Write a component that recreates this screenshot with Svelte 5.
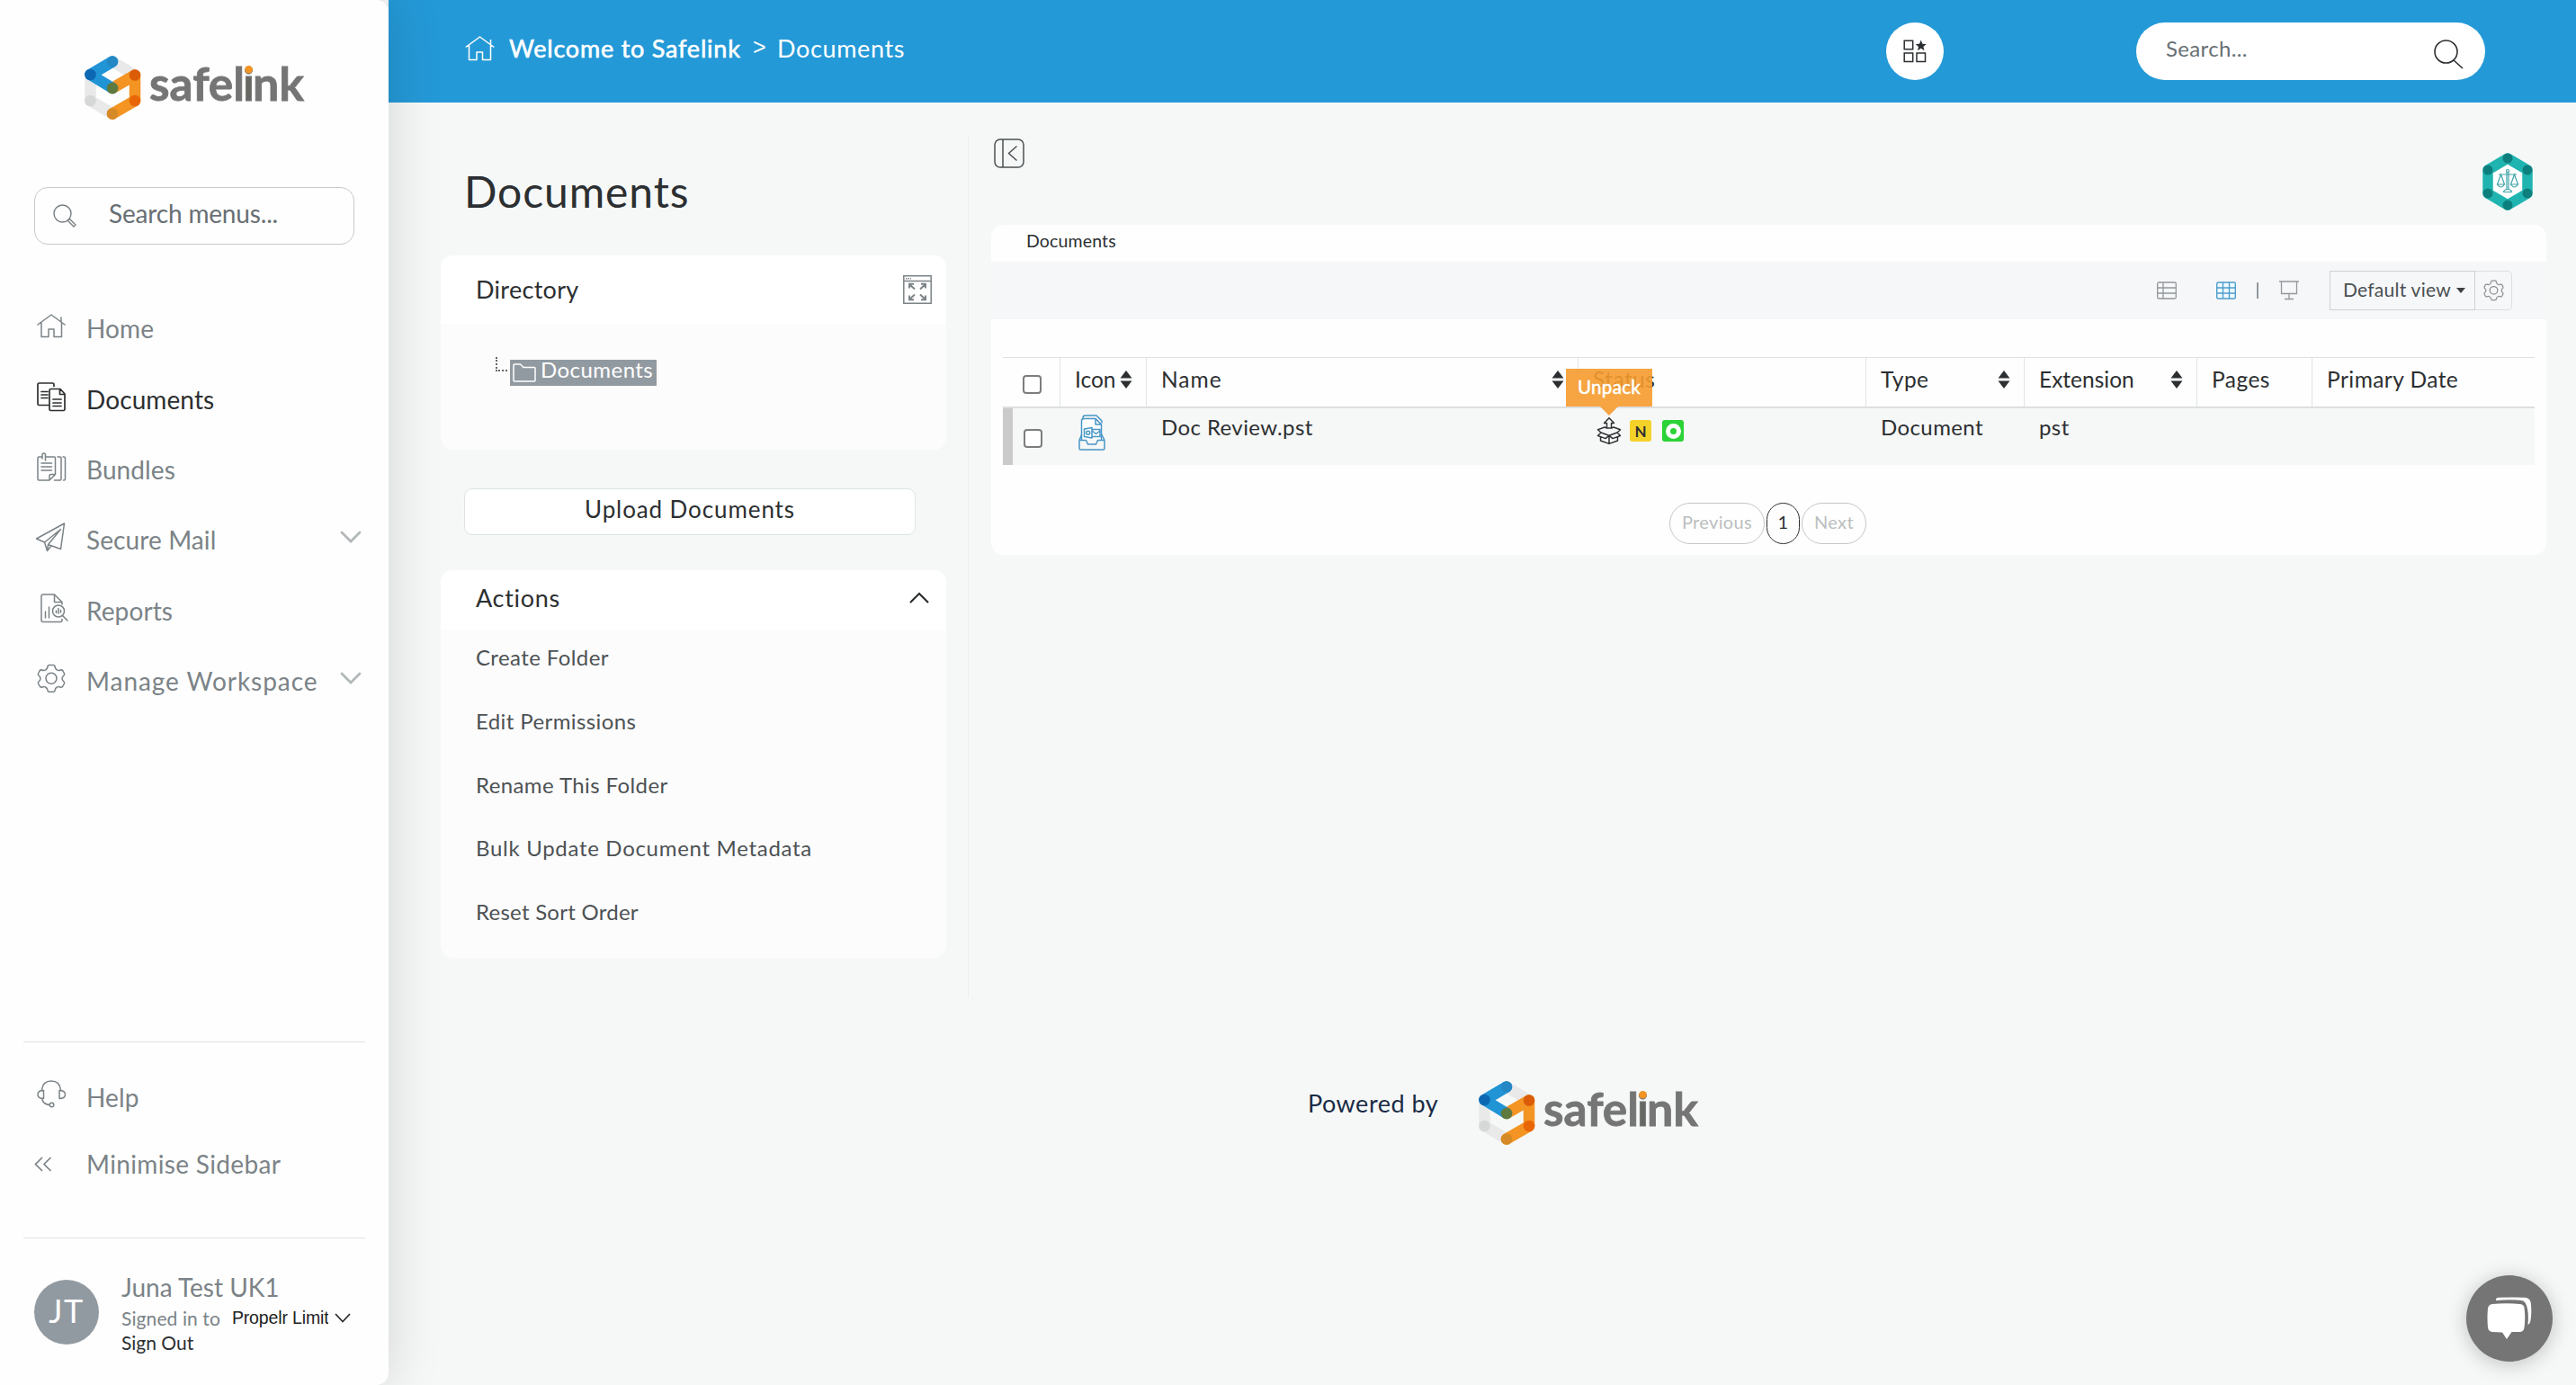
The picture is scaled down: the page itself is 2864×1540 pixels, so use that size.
<script>
  const nav = [
    { label: 'Home', icon: 'home' },
    { label: 'Documents', icon: 'docs', active: true },
    { label: 'Bundles', icon: 'bundles' },
    { label: 'Secure Mail', icon: 'plane', more: true },
    { label: 'Reports', icon: 'report' },
    { label: 'Manage Workspace', icon: 'gear', more: true }
  ];
  const actions = [
    'Create Folder',
    'Edit Permissions',
    'Rename This Folder',
    'Bulk Update Document Metadata',
    'Reset Sort Order'
  ];
  const columns = [
    { label: 'Icon', sort: true },
    { label: 'Name', sort: true },
    { label: 'Status' },
    { label: 'Type', sort: true },
    { label: 'Extension', sort: true },
    { label: 'Pages' },
    { label: 'Primary Date' }
  ];
</script>

{#snippet logo()}
  <svg class="logo" viewBox="0 0 246 72" width="246" height="72">
    <g fill="none" stroke-width="12.5" stroke-linecap="round">
      <path d="M31 6.5 56 21.5M6.5 21V50L31 64.5" stroke="#e9e9ea" />
      <path d="M31 36 56 21.5V50L31 64.5" stroke="#f39423" stroke-linejoin="round" />
      <path d="M31 6.5 6.5 21 31 36" stroke="#2194d6" stroke-linejoin="round" />
    </g>
    <circle cx="6.5" cy="21" r="6.3" fill="#0d68b3" />
    <circle cx="31" cy="6.5" r="6.2" fill="#2488c4" />
    <circle cx="31" cy="36" r="6.3" fill="#5f7a3e" />
    <circle cx="56" cy="21.5" r="6.3" fill="#db5c07" />
    <circle cx="56" cy="50" r="6.3" fill="#e96606" />
    <circle cx="31" cy="64.5" r="6.3" fill="#d58a26" />
    <circle cx="6.5" cy="50" r="6.3" fill="#d6d7d7" />
    <text x="72" y="49.5" textLength="106" lengthAdjust="spacingAndGlyphs">safel</text>
    <text class="dark" x="182.6" y="49.5" text-anchor="middle">i</text>
    <text x="187" y="49.5" textLength="57" lengthAdjust="spacingAndGlyphs">nk</text>
    <circle cx="182.6" cy="15.2" r="4.3" fill="#f39423" />
  </svg>
{/snippet}

{#snippet gearShape()}
  <path d="M12 3.500Q12 1.500 13.500 1.500H18.500Q20 1.500 20 3.500 20.500 6 22.500 7 24 8 26.500 7 28 6.500 29 8L30.500 11Q31 12.500 29.500 13.500 28 15 28 16.500 28 18 29.500 19.500 31 20.500 30.500 22L28.500 25.500Q27.500 26.500 26 26 24 25 22.500 26 20.500 27 20 29.500 20 31.300 18.500 31.300H13.500Q12 31.300 12 29.500 11.500 27 9.500 26 8 25 6 26 4.500 26.500 3.500 25.500L1.500 22Q1 20.500 2.500 19.500 4 18 4 16.500 4 15 2.500 13.500 1 12.500 1.500 11L3 8Q4 6.500 5.500 7 8 8 9.500 7 11.500 6 12 3.500Z" /><circle cx="16" cy="16.300" r="6" />
{/snippet}

{#snippet icon(name)}
  <svg class="ico" viewBox="0 0 32 32" width="32" height="32" fill="none" stroke="currentColor" stroke-width="1.5" stroke-linecap="round" stroke-linejoin="round">
    {#if name === 'home'}
      <path d="M1 15 16 4 31 15M5 12.500V28.500H13V20H19V28.500H27.500V12.500M27 12V7" />
    {:else if name === 'docs'}
      <g stroke-width="1.700"><path d="M13 25.500H2.500Q1 25.500 1 24V2.500Q1 1 2.500 1H17.500Q19 1 19 2.500V4.500M5 10.500H12M5 14H12M5 17.500H12" />
      <path d="M15.500 7.500H26L31 13V30Q31 31.500 29.500 31.500H15.500Q14 31.500 14 30V9Q14 7.500 15.500 7.500ZM25.500 7.500V13.500H31M18 19H27M18 23H27M18 26.500H27" /></g>
    {:else if name === 'bundles'}
      <path d="M5 5H2.500Q1 5 1 6.500V29.500Q1 31 2.500 31H14L20.500 24.500V6.500Q20.500 5 19 5H10M14 31V26Q14 24.500 15.500 24.500H20.500M6 7V3Q6 1 7.700 1 9.500 1 9.500 3V9M5 12H16.500M5 16H16.500M5 20H16.500M23 5H25.500Q27 5 27 6.500V29.500Q27 31 25.500 31H19.500M29 5H30Q31.500 5 31.500 6.500V29.500Q31.500 31 30 31H29.500" />
    {:else if name === 'plane'}
      <path d="M30.500 1 -.500 18 8.500 22 26.500 7.500 12.500 24.500 26.500 29.500ZM8.500 22 11.500 31.500 16 26M11.500 31.500 12.500 24.500M8.500 22 24 9.500" />
    {:else if name === 'report'}
      <path d="M24 28.500V29.500Q24 31.500 22 31.500H3Q1 31.500 1 29.500V3Q1 1 3 1H15.500L24 9.500V12M15.500 1V9.500H24M5.500 20V27M9.500 15V27" transform="translate(4 0)" />
      <circle cx="24" cy="19.500" r="6.500" /><path d="M28.500 24.500 34 30M21.500 19V21.500M24 16.500V22M26.500 18.500V21" />
    {:else if name === 'gear'}
      {@render gearShape()}
    {:else if name === 'help'}
      <path d="M5.500 11Q6.500 1 16 1 25.500 1 26.500 11M7.500 11.500V20.500Q1 20.500 1 16 1 11.500 7.500 11.500ZM25 11.500V20.500Q31.500 20.500 31.500 16 31.500 11.500 25 11.500ZM5.500 20.500Q7 27 14 27.500" /><circle cx="16.500" cy="27.500" r="2.300" />
    {/if}
  </svg>
{/snippet}

{#snippet sortMark()}
  <svg class="sort" viewBox="0 0 14 20" width="14" height="20"><path d="M7 0 13.500 8.500H.500ZM7 20 .500 11.500H13.500Z" fill="#2c2f31" /></svg>
{/snippet}

<div class="app">
  <aside>
    <div class="brand">{@render logo()}</div>
    <div class="menu-search">
      <svg viewBox="0 0 26 26" width="26" height="26" fill="none" stroke="#777e82" stroke-width="1.400"><circle cx="10.500" cy="10.500" r="9.500" /><path d="M16.500 18.500 18.500 16.500 25 23 23 25Z" stroke-linejoin="round" /></svg>
      <span>Search menus...</span>
    </div>
    <nav>
      {#each nav as item}
        <div class={['nav-row', item.active && 'active']}>
          {@render icon(item.icon)}
          <span>{item.label}</span>
          {#if item.more}
            <svg class="chev" viewBox="0 0 24 14" width="24" height="14" fill="none" stroke="#b2b8ba" stroke-width="2.800" stroke-linecap="round"><path d="M2 2 12 12 22 2" /></svg>
          {/if}
        </div>
      {/each}
    </nav>
    <div class="side-foot">
      <div class="nav-row help">{@render icon('help')}<span>Help</span></div>
      <div class="nav-row mini">
        <svg class="dbl" viewBox="0 0 20 17" width="20" height="17" fill="none" stroke="#7b8387" stroke-width="1.700"><path d="M9 1 1.500 8.500 9 16M18.500 1 11 8.500 18.500 16" /></svg>
        <span>Minimise Sidebar</span>
      </div>
    </div>
    <div class="user">
      <div class="avatar">JT</div>
      <div class="user-info">
        <div class="user-name">Juna Test UK1</div>
        <div class="user-org">
          <span>Signed in to</span><b>Propelr Limit</b>
          <svg viewBox="0 0 18 11" width="18" height="11" fill="none" stroke="#2c2f31" stroke-width="1.800"><path d="M1 1 9 9.500 17 1" /></svg>
        </div>
        <div class="sign-out">Sign Out</div>
      </div>
    </div>
  </aside>

  <div class="content">
    <header>
      <svg class="home" viewBox="0 0 33 28" width="33" height="28" fill="none" stroke="#fff" stroke-width="1.500" stroke-linejoin="round"><path d="M.700 12.500 16.500 1 32.300 12.500M4.500 10V26.500H13V18H19.500V26.500H28.500V10M28.500 9.500V4" /></svg>
      <span class="crumb-home">Welcome to Safelink</span>
      <span class="crumb-sep">&gt;</span>
      <span class="crumb-here">Documents</span>
      <div class="apps">
        <svg viewBox="0 0 26 26" width="26" height="26" fill="none" stroke="#2c2f31" stroke-width="1.500"><path d="M1.200 1.200H10.700V10.700H1.200ZM1.200 15H10.700V24.500H1.200ZM15 15H24.500V24.500H15Z" /><path d="M19.700.500 21.400 4.800 25.700 5 22.400 7.900 23.500 12.200 19.700 9.800 15.900 12.200 17 7.900 13.700 5 18 4.800Z" fill="#2c2f31" stroke="none" /></svg>
      </div>
      <div class="search">
        <span>Search...</span>
        <svg viewBox="0 0 33 33" width="33" height="33" fill="none" stroke="#2c2f31" stroke-width="1.600"><circle cx="13.500" cy="13.500" r="12.500" /><path d="M22 23 32 32" /></svg>
      </div>
    </header>

    <div class="body">
      <section class="left">
        <h1>Documents</h1>
        <div class="card directory">
          <div class="card-head">
            <span>Directory</span>
            <svg viewBox="0 0 32 32" width="32" height="32" fill="none" stroke="#7b8387" stroke-width="1.500"><path d="M.800.800H31.200V31.200H.800ZM.800 6.500H31.200" /><path d="M3 3.700H9" stroke-dasharray="1.500 1" /><path d="M13 15.500 7 10M7 14.500V9.700H12M19 15.500 25 10M20 9.700H25V14.500M13 21.500 7 27M7 22.500V27.300H12M19 21.500 25 27M20 27.300H25V22.500" stroke-width="1.900" /></svg>
          </div>
          <div class="tree">
            <i class="branch"></i>
            <div class="node">
              <svg viewBox="0 0 26 21" width="26" height="21" fill="none" stroke="#fff" stroke-width="1.500" stroke-linejoin="round"><path d="M1 2Q1 1 2 1H8.500L12 4.500H24Q25 4.500 25 5.500V19Q25 20 24 20H2Q1 20 1 19Z" /></svg>
              <span>Documents</span>
            </div>
          </div>
        </div>
        <button class="upload">Upload Documents</button>
        <div class="card actions">
          <div class="card-head">
            <span>Actions</span>
            <svg viewBox="0 0 22 13" width="22" height="13" fill="none" stroke="#2c2f31" stroke-width="2.200"><path d="M1 12 11 2 21 12" /></svg>
          </div>
          {#each actions as a}<div class="action">{a}</div>{/each}
        </div>
      </section>

      <section class="right">
        <div class="tools">
          <svg class="collapse" viewBox="0 0 34 34" width="34" height="34" fill="none" stroke="#4b5052" stroke-width="1.500"><rect x="1" y="1" width="32" height="31" rx="6" /><path d="M10 1V32M25.500 8.500 16.500 16.500 25.500 24.500" /></svg>
          <svg class="badge" viewBox="0 0 56 64" width="56" height="64">
            <path d="M28 6 50 19V45L28 58 6 45V19Z" fill="#fff" stroke="#20b4b0" stroke-width="11.500" stroke-linejoin="round" />
            <g fill="#0d7f7d"><circle cx="28" cy="6" r="5.500" /><circle cx="50" cy="19" r="5.500" /><circle cx="50" cy="45" r="5.500" /><circle cx="28" cy="58" r="5.500" /><circle cx="6" cy="45" r="5.500" /><circle cx="6" cy="19" r="5.500" /></g>
            <g fill="none" stroke="#3fa5a8" stroke-width="1.200"><path d="M18 24H38M27 21V40M29 21V40M23.500 43.500Q24 40.500 28 40.500T32.500 43.500ZM20.500 24 16.500 35H24.500ZM35.500 24 31.500 35H39.500ZM16.500 35Q20.500 41 24.500 35M31.500 35Q35.500 41 39.500 35" /><circle cx="28" cy="20" r="1.500" /></g>
          </svg>
        </div>

        <div class="panel">
          <div class="panel-title">Documents</div>
          <div class="toolbar">
            <svg class="v-list" viewBox="0 0 22 20" width="22" height="20" fill="none" stroke="#92989b" stroke-width="1.300"><rect x=".700" y="1" width="20.600" height="18" rx="1.500" /><path d="M7 1V19M1 7H21M1 13H21" /></svg>
            <svg class="v-grid" viewBox="0 0 22 20" width="22" height="20" fill="#eefaff" stroke="#4f9dcb" stroke-width="1.400"><rect x=".700" y="1" width="20.600" height="18" rx="1.500" /><path d="M7.500 1V19M14.500 1V19M1 7H21M1 13H21" /></svg>
            <i class="bar"></i>
            <svg class="v-show" viewBox="0 0 22 22" width="22" height="22" fill="none" stroke="#92989b" stroke-width="1.300"><path d="M0 1H22M2.500 1V14.500H19.500V1M11 14.500V20.500M6 20.500H16" /></svg>
            <div class="view"><span>Default view</span><i class="caret"></i></div>
            <div class="cog">
              <svg viewBox="0 0 32 33" width="23" height="24" fill="none" stroke="#8b9194" stroke-width="1.700" stroke-linejoin="round">{@render gearShape()}</svg>
            </div>
          </div>

          <div class="table">
            <div class="tr head">
              <div class="th check"><i class="box"></i></div>
              {#each columns as c}
                <div class="th"><span>{c.label}</span>{#if c.sort}{@render sortMark()}{/if}</div>
              {/each}
            </div>
            <div class="tr row">
              <div class="td check"><i class="box"></i></div>
              <div class="td file">
                <svg viewBox="0 0 30 40" width="30" height="40" fill="none" stroke="#4796c6" stroke-width="1.500" stroke-linejoin="round" stroke-linecap="round"><path d="M5 3.500Q5 1 7.500 1H20L26 7V9" /><path d="M3.500 28V7Q3.500 4.500 6 4.500H19L25.500 11V28M19 4.500V11H25.500" fill="#fff" /><path d="M3.500 22.500 1 28.500V37.500Q1 39 2.500 39H27.500Q29 39 29 37.500V28.500L26 22.500M1 28.500H8.500L10.500 33H19.500L21.500 28.500H29" /><path d="M6.500 16 15 14.500V26L6.500 24.500ZM15 16.500H24V24.500H15M16 18.500 19.500 21.500 24 18" /><circle cx="10.700" cy="20.300" r="2" /></svg>
              </div>
              <div class="td name">Doc Review.pst</div>
              <div class="td status">
                <div class="unpack">
                  <svg viewBox="0 0 28 30" width="28" height="30" fill="none" stroke="#2f3234" stroke-width="1.500" stroke-linejoin="round"><path d="M11.500 12V6.500H8.500L14 .800 19.500 6.500H16.500V12Z" /><path d="M11.500 12 9 11 1.500 13.800 5 17 14 20.300 23 17 26.500 13.800 19 11 16.500 12M5 17 1.500 20.500 10 23.600 14 20.300 18 23.600 26.500 20.500 23 17M4.500 22V26L14 29.400 23.500 26V22M14 20.300V29" /></svg>
                  <div class="tip">Unpack</div>
                </div>
                <i class="flag-n">N</i>
                <i class="flag-o"></i>
              </div>
              <div class="td">Document</div>
              <div class="td">pst</div>
              <div class="td"></div>
              <div class="td"></div>
            </div>
          </div>

          <div class="pager"><span class="prev">Previous</span><span class="cur">1</span><span class="next">Next</span></div>
        </div>
      </section>
    </div>

    <footer><span>Powered by</span>{@render logo()}</footer>
  </div>

  <div class="chat">
    <svg viewBox="0 0 50 48" width="50" height="48" fill="#fff"><path d="M10 3Q10 1 13 .800 28 0 42 .800 48 1 48.800 7 50 18 48.500 26 48 30 45.500 31 47 14 42.500 6.500 41 4 37 3.800 24 2.600 10 4Z" /><path d="M6 8Q21 6.500 37 8 41 8.500 41.500 12 43 23 41.500 34 41 38.500 37 39H27.500L22 47 17 39.500 6 39Q1.500 38.500 1 34 0 23 1 13 1.500 8.500 6 8Z" /></svg>
  </div>
</div>

<style>
  :global(body) { margin: 0; background: #f6f8f8; }
  * { box-sizing: border-box; }
  svg { flex: none; display: block; overflow: visible; }
  i { font-style: normal; }

  .app { display: flex; width: 2864px; height: 1540px; overflow: hidden; font-family: Lato, 'Liberation Sans', sans-serif; color: #2c2f31; background: #f6f8f8; }

  .logo text { font: 700 51px Lato, sans-serif; fill: #757575; stroke: #757575; stroke-width: 0.8px; letter-spacing: 0; }
  .logo .dark { fill: #666863; }

  aside { position: relative; z-index: 2; flex: none; display: flex; flex-direction: column; width: 432px; height: 1540px; background: #fefefe; border-radius: 0 14px 14px 0; box-shadow: 0 0 60px rgba(0, 0, 0, 0.15); }
  .brand { height: 208px; padding: 62px 0 0 94px; }
  .menu-search { display: flex; align-items: center; gap: 36px; width: 356px; height: 64px; margin-left: 38px; padding: 0 20px; border: 1px solid #c5c9cb; border-radius: 15px; color: #686f73; font-size: 28px; letter-spacing: -0.17px; }
  .menu-search span { margin-top: -7px; }
  nav { margin-top: 54px; height: 832px; }
  .nav-row { display: flex; align-items: center; height: 78.4px; padding-left: 41px; color: #7b8387; font-size: 28px; letter-spacing: 0.1px; white-space: nowrap; }
  .nav-row .ico, .nav-row .chev { margin-bottom: 6px; }
  .nav-row span { margin-left: 23px; width: 257px; overflow: hidden; line-height: 40px; }
  nav .nav-row:last-child span { letter-spacing: 0.95px; }
  .nav-row .chev { margin-left: 25px; }
  .nav-row.active { color: #2c2f31; }
  .side-foot { width: 380px; height: 219px; margin-left: 26px; border-top: 1px solid #dfe1e1; border-bottom: 1px solid #dfe1e1; padding-top: 24px; }
  .help, .mini { height: 74px; padding-left: 15px; }
  .mini { padding-left: 12px; }
  .nav-row.mini span { margin-left: 38px; letter-spacing: 0.35px; }
  .user { display: flex; align-items: flex-start; gap: 25px; padding: 46px 0 0 38px; }
  .avatar { width: 72px; height: 72px; border-radius: 50%; background: #929aa1; color: #fff; font-size: 36px; line-height: 68px; text-align: center; letter-spacing: 1.5px; }
  .user-info { margin-top: -9px; }
  .user-name { color: #7b8387; font-size: 28px; line-height: 34px; }
  .user-org { display: flex; align-items: center; height: 30px; margin-top: 2px; font-size: 21px; letter-spacing: 0.1px; color: #7b8387; }
  .user-org b { width: 107px; margin: 0 7px 0 13px; overflow: hidden; font: 400 19.500px 'Liberation Sans', sans-serif; letter-spacing: -0.15px; color: #222; white-space: nowrap; }
  .sign-out { font-size: 21px; line-height: 26px; }

  .content { flex: 1; display: flex; flex-direction: column; min-width: 0; }
  header { flex: none; display: flex; align-items: center; height: 114px; padding-left: 85px; background: #2499d7; color: #fff; font-size: 27px; white-space: nowrap; }
  header span { line-height: 40px; margin-bottom: 7px; }
  .home { margin-bottom: 6px; }
  .crumb-home { width: 258px; margin-left: 16px; letter-spacing: 0.78px; -webkit-text-stroke: 0.6px #fff; }
  header .crumb-sep { width: 14px; margin: 0 13px 11px; font: 25px/40px 'Liberation Sans', sans-serif; }
  .crumb-here { width: 142px; letter-spacing: 0.65px; }
  .apps { display: flex; align-items: center; justify-content: center; width: 64px; height: 64px; margin-left: 1091px; border-radius: 50%; background: #fff; }
  .search { display: flex; align-items: center; justify-content: space-between; width: 388px; height: 64px; margin-left: 214px; padding: 0 24px 0 33px; border-radius: 32px; background: #fff; color: #686f73; font-size: 24px; letter-spacing: 0.35px; }
  .search svg { margin-top: 6px; }
  .search span { margin-bottom: 6px; }

  .body { flex: none; display: flex; height: 1000px; }
  .left { width: 645px; height: 957px; margin-top: 38px; padding-left: 58px; border-right: 1px solid #eceeef; }
  h1 { margin: 0 0 0 26px; height: 132px; font-size: 48px; font-weight: 400; line-height: 122px; letter-spacing: 0.9px; }
  .card { width: 562px; background: #fcfcfc; border-radius: 14px; overflow: hidden; }
  .card-head { display: flex; align-items: center; justify-content: space-between; background: #fff; padding: 0 16px 0 39px; font-size: 27px; letter-spacing: 0.3px; }
  .directory { height: 216px; }
  .directory .card-head { height: 76px; }
  .card-head span { line-height: 40px; }
  .tree { display: flex; padding: 37px 0 0 61px; }
  .branch { width: 13px; height: 16px; border-left: 2px dotted #666; border-bottom: 2px dotted #666; }
  .node { display: flex; align-items: center; gap: 5px; width: 163px; height: 29px; margin: 3px 0 0 3px; padding-left: 3px; background: #929aa1; color: #fff; font-size: 24px; line-height: 26px; letter-spacing: 0.45px; }
  .node span { margin-bottom: 8px; }
  .upload { display: block; width: 502px; height: 52px; margin: 43px 0 39px 26px; padding: 0 0 6px; border: 1px solid #dde3e3; border-radius: 9px; background: #fff; color: inherit; font: 26px Lato, sans-serif; letter-spacing: 0.9px; }
  .actions { height: 431px; }
  .actions .card-head { height: 66px; padding-right: 19px; letter-spacing: 0.7px; }
  .actions .card-head span { margin-bottom: 4px; }
  .actions .card-head svg { margin-bottom: 5px; }
  .action { height: 70.800px; padding-left: 39px; font-size: 24px; line-height: 61px; letter-spacing: 0.4px; color: #4d5254; }
  .action:nth-child(5) { letter-spacing: 0.7px; }
  .action:nth-child(6) { letter-spacing: 0.25px; }

  .right { width: 1754px; margin-left: 25px; }
  .tools { display: flex; justify-content: space-between; height: 136px; padding: 40px 40px 0 3px; }
  .badge { margin-top: 16px; }
  .panel { width: 1729px; height: 367px; background: #fefefe; border-radius: 14px; overflow: hidden; }
  .panel-title { height: 41px; padding-left: 39px; font-size: 19.500px; line-height: 36px; letter-spacing: 0.15px; }
  .toolbar { display: flex; align-items: center; justify-content: flex-end; height: 64px; padding-right: 38px; background: #f6f7f9; }
  .bar { width: 2px; height: 18px; margin: 0 23px; background: #92989b; }
  .v-grid { margin-left: 44px; }
  .view, .cog { display: flex; align-items: center; height: 44px; border: 1px solid #cdd1d4; }
  .view { gap: 6px; width: 162px; margin-left: 34px; padding-left: 14px; font-size: 21px; letter-spacing: 0.25px; color: #4b5052; }
  .view span { width: 120px; margin-bottom: 3px; white-space: nowrap; }
  .caret { border: 5px solid transparent; border-top: 6px solid #3c4042; border-bottom: 0; }
  .cog { width: 41px; border-left: 0; border-radius: 0 5px 5px 0; justify-content: center; border-color: #dcdfe1; }

  .table { width: 1703px; margin: 42px 0 0 13px; border-top: 1px solid #dee0e1; }
  .tr { display: grid; grid-template-columns: 63px 96px 480px 320px 176px 192px 128px 248px; }
  .head { height: 56px; border-bottom: 2px solid #dcdfe0; }
  .th { display: flex; justify-content: space-between; padding: 5px 15px 0 16px; border-left: 1px solid #e1e3e4; font-size: 24.500px; line-height: 37px; letter-spacing: 0.45px; white-space: nowrap; }
  .th:nth-child(2), .th:nth-child(6) { letter-spacing: 0; }
  .th:nth-child(3) { letter-spacing: 1px; }
  .th:first-child { border-left: 0; }
  .sort { margin-top: 9px; }
  .th.check { padding: 19px 0 0 22px; }
  .box { display: block; width: 21px; height: 21px; border: 2px solid #7d7d7d; border-radius: 4px; background: #fff; }
  .row { height: 63px; background: #f6f7f7; }
  .td { padding-left: 17px; font-size: 24px; line-height: 42px; letter-spacing: 0.4px; }
  .td.check { padding: 23px 0 0 12px; border-left: 11px solid #cacaca; }
  .td.file { padding: 7px 0 0 21px; }
  .td.status { display: flex; align-items: center; gap: 10px; height: 50px; padding-left: 21px; }
  .unpack { position: relative; }
  .tip { position: absolute; left: -34px; bottom: 42px; width: 96px; height: 42px; background: rgba(245, 155, 45, 0.9); color: #fff; font-size: 20.500px; line-height: 41px; text-align: center; letter-spacing: 0.3px; -webkit-text-stroke: 0.5px #fff; }
  .tip::after { content: ''; position: absolute; left: 38px; top: 42px; border: 10px solid transparent; border-top-color: #f5a441; border-bottom: 0; }
  .flag-n, .flag-o { display: flex; align-items: center; justify-content: center; width: 24px; height: 24px; border-radius: 3px; }
  .flag-n { margin-left: -1px; background: #f5d229; font: 700 17px Lato, sans-serif; letter-spacing: 0; }
  .flag-o { margin-left: 2px; background: #2bd336; }
  .flag-o::after { content: ''; width: 7px; height: 7px; border: 5px solid #fff; border-radius: 50%; box-sizing: content-box; }

  .pager { display: flex; gap: 2px; margin: 42px 0 0 754px; font-size: 20px; letter-spacing: 0.35px; }
  .pager span { height: 46px; border: 1px solid #c3c6c7; border-radius: 23px; text-align: center; line-height: 41px; color: #bbbec0; }
  .pager .prev { width: 106px; }
  .pager .cur { width: 37px; border-color: #2c2f31; color: #2c2f31; }
  .pager .next { width: 72px; }

  footer { display: flex; padding: 88px 0 0 1022px; font-size: 27px; letter-spacing: 0.5px; color: #1a2b45; }
  footer span { width: 190px; line-height: 49px; }

  .chat { position: absolute; left: 2742px; top: 1418px; display: flex; align-items: center; justify-content: center; width: 96px; height: 96px; border-radius: 50%; background: #757575; box-shadow: 0 3px 22px rgba(0, 0, 0, 0.22); }
</style>
